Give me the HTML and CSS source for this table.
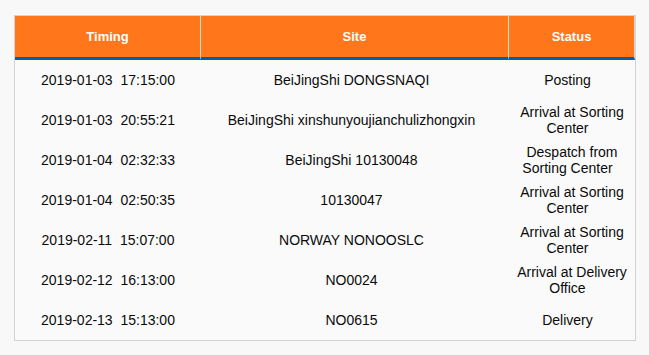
FILE: index.html
```html
<!DOCTYPE html>
<html>
<head>
<meta charset="utf-8">
<link rel="stylesheet" href="styles.css">
</head>
<body>
<div class="wrap">
<table class="track">
  <colgroup>
    <col class="c1"><col class="c2"><col class="c3">
  </colgroup>
  <thead>
    <tr><th>Timing</th><th>Site</th><th>Status</th></tr>
  </thead>
  <tbody>
    <tr><td class="time">2019-01-03  17:15:00</td><td class="site">BeiJingShi DONGSNAQI</td><td class="status">Posting</td></tr>
    <tr><td class="time">2019-01-03  20:55:21</td><td class="site">BeiJingShi xinshunyoujianchulizhongxin</td><td class="status">Arrival at Sorting Center</td></tr>
    <tr><td class="time">2019-01-04  02:32:33</td><td class="site">BeiJingShi 10130048</td><td class="status">Despatch from Sorting Center</td></tr>
    <tr><td class="time">2019-01-04  02:50:35</td><td class="site">10130047</td><td class="status">Arrival at Sorting Center</td></tr>
    <tr><td class="time">2019-02-11  15:07:00</td><td class="site">NORWAY NONOOSLC</td><td class="status">Arrival at Sorting Center</td></tr>
    <tr><td class="time">2019-02-12  16:13:00</td><td class="site">NO0024</td><td class="status">Arrival at Delivery Office</td></tr>
    <tr><td class="time">2019-02-13  15:13:00</td><td class="site">NO0615</td><td class="status">Delivery</td></tr>
  </tbody>
</table>
</div>
</body>
</html>
```
FILE: styles.css
```css
html, body {
  margin: 0;
  padding: 0;
  background: #f8f8f8;
}
.wrap {
  padding: 15px 0 0 14px;
}
.track {
  border-collapse: separate;
  border-spacing: 0;
  table-layout: fixed;
  width: 622px;
  border: 1px solid #d3d3d3;
  background: #fafafa;
  font-family: "Liberation Sans", Arial, sans-serif;
  font-size: 14px;
  line-height: 16px;
  color: #0a0a0a;
}
.c1 { width: 186px; }
.c2 { width: 308px; }
.c3 { width: 126px; }
.track th {
  background: #ff761b;
  color: #fff;
  font-weight: bold;
  font-size: 13px;
  height: 41px;
  padding: 0;
  text-align: center;
  vertical-align: middle;
  border-right: 1px solid #d8d8d8;
  border-bottom: 3px solid #0c5aa8;
}
.track td {
  height: 40px;
  padding: 0 3px;
  text-align: center;
  vertical-align: middle;
}
.track td.time {
  white-space: pre;
}
.track td.site::after {
  content: "";
  display: inline-block;
  width: 7px;
}
.track td.status::after {
  content: "";
  display: inline-block;
  width: 9px;
}
```
